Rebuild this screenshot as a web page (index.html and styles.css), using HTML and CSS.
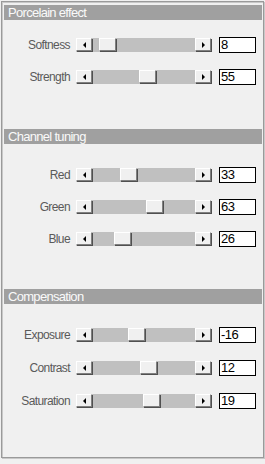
FILE: index.html
```html
<!DOCTYPE html>
<html lang="en">
<head>
  <meta charset="UTF-8" />
  <title>Porcelain</title>
  <link rel="stylesheet" href="styles.css">
</head>
<body>

  <div class="panel">

    <section class="group">
      <div class="group-title">Porcelain effect</div>
      <div class="rows rows-first">
        <div class="row">
          <span class="label">Softness</span>
          <div class="scroll">
            <span class="arrow arrow-left"></span>
            <div class="track"><span class="thumb" style="margin-left:7px"></span></div>
            <span class="arrow arrow-right"></span>
          </div>
          <div class="value">8</div>
        </div>
        <div class="row">
          <span class="label">Strength</span>
          <div class="scroll">
            <span class="arrow arrow-left"></span>
            <div class="track"><span class="thumb" style="margin-left:47px"></span></div>
            <span class="arrow arrow-right"></span>
          </div>
          <div class="value">55</div>
        </div>
      </div>
    </section>

    <section class="group">
      <div class="group-title">Channel tuning</div>
      <div class="rows">
        <div class="row">
          <span class="label">Red</span>
          <div class="scroll">
            <span class="arrow arrow-left"></span>
            <div class="track"><span class="thumb" style="margin-left:28px"></span></div>
            <span class="arrow arrow-right"></span>
          </div>
          <div class="value">33</div>
        </div>
        <div class="row">
          <span class="label">Green</span>
          <div class="scroll">
            <span class="arrow arrow-left"></span>
            <div class="track"><span class="thumb" style="margin-left:54px"></span></div>
            <span class="arrow arrow-right"></span>
          </div>
          <div class="value">63</div>
        </div>
        <div class="row">
          <span class="label">Blue</span>
          <div class="scroll">
            <span class="arrow arrow-left"></span>
            <div class="track"><span class="thumb" style="margin-left:22px"></span></div>
            <span class="arrow arrow-right"></span>
          </div>
          <div class="value">26</div>
        </div>
      </div>
    </section>

    <section class="group">
      <div class="group-title">Compensation</div>
      <div class="rows rows-wide">
        <div class="row">
          <span class="label">Exposure</span>
          <div class="scroll">
            <span class="arrow arrow-left"></span>
            <div class="track"><span class="thumb" style="margin-left:36px"></span></div>
            <span class="arrow arrow-right"></span>
          </div>
          <div class="value">-16</div>
        </div>
        <div class="row">
          <span class="label">Contrast</span>
          <div class="scroll">
            <span class="arrow arrow-left"></span>
            <div class="track"><span class="thumb" style="margin-left:48px"></span></div>
            <span class="arrow arrow-right"></span>
          </div>
          <div class="value">12</div>
        </div>
        <div class="row">
          <span class="label">Saturation</span>
          <div class="scroll">
            <span class="arrow arrow-left"></span>
            <div class="track"><span class="thumb" style="margin-left:51px"></span></div>
            <span class="arrow arrow-right"></span>
          </div>
          <div class="value">19</div>
        </div>
      </div>
    </section>

  </div>

</body>
</html>
```

FILE: styles.css
```css
* {
  box-sizing: border-box;
}

body {
  margin: 0;
  background: #f0f0f0;
  font-family: "Liberation Sans", Arial, sans-serif;
}

.panel {
  width: 263px;
  height: 457px;
  margin: 1px;
  padding: 3px 1px 0 2px;
  border: 1px solid #9a9a9a;
  box-shadow: inset 1px 1px 0 #c8c8c8, 1px 1px 0 #c8c8c8;
  background: #f0f0f0;
}

.group-title {
  height: 15px;
  padding-left: 4px;
  background: #a0a0a0;
  color: #fafafa;
  font-size: 13px;
  line-height: 15px;
  letter-spacing: -0.7px;
}

.rows {
  display: flex;
  flex-direction: column;
  gap: 16px;
  padding-top: 23px;
  margin-bottom: 42px;
}

.rows-first {
  padding-top: 17px;
  margin-bottom: 44px;
}

.rows-wide {
  gap: 17px;
}

.row {
  display: flex;
  align-items: center;
  height: 16px;
}

.label {
  width: 66px;
  margin-right: 6px;
  text-align: right;
  color: #5a5a5a;
  font-size: 12px;
  letter-spacing: -0.6px;
  white-space: nowrap;
}

.scroll {
  display: flex;
  width: 135px;
  height: 14px;
  margin-right: 8px;
  background: #c0c0c0;
}

.track {
  flex: 1;
  display: flex;
}

.arrow,
.thumb {
  width: 16px;
  height: 14px;
  background: #f0f0f0;
  border-top: 1px solid #fff;
  border-left: 1px solid #fff;
  border-right: 1px solid #808080;
  border-bottom: 1px solid #808080;
  box-shadow: 1px 1px 0 #505050;
}

.thumb {
  width: 17px;
  height: 13px;
}

.arrow {
  display: flex;
  align-items: center;
  justify-content: center;
  height: 13px;
}

.arrow::before {
  content: "";
  border-top: 3px solid transparent;
  border-bottom: 3px solid transparent;
}

.arrow-left::before {
  border-right: 3px solid #000;
}

.arrow-right::before {
  border-left: 3px solid #000;
}

.value {
  width: 37px;
  height: 16px;
  padding-left: 1px;
  border: 1px solid #000;
  background: #fff;
  color: #000;
  font-size: 13px;
  line-height: 14px;
  letter-spacing: -0.5px;
}
```
